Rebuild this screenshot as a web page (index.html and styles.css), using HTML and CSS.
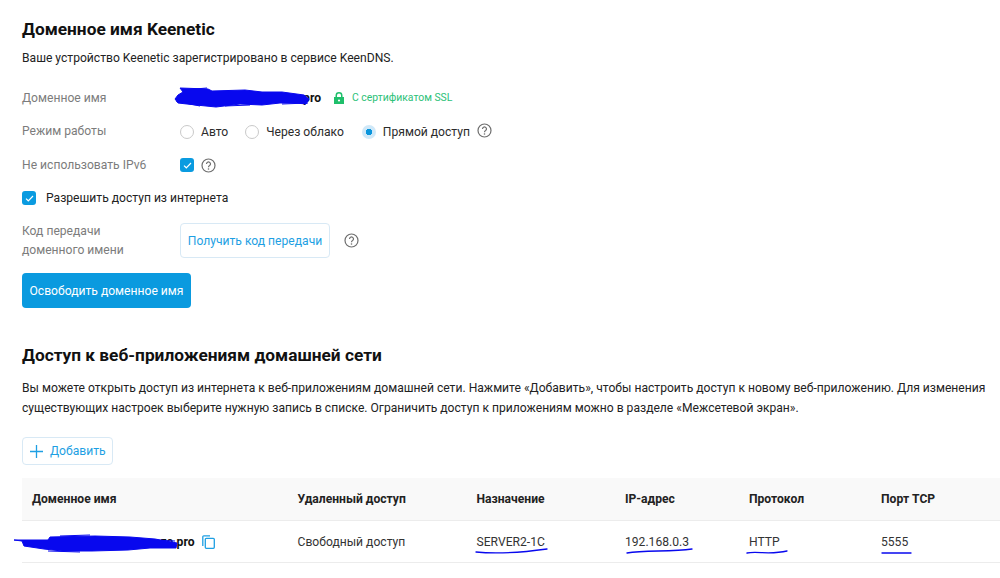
FILE: index.html
```html
<!DOCTYPE html>
<html lang="ru">
<head>
<meta charset="utf-8">
<title>KeenDNS</title>
<link rel="stylesheet" href="styles.css">
</head>
<body>
<main class="page">
  <h2 class="title">Доменное имя Keenetic</h2>
  <p class="text">Ваше устройство Keenetic зарегистрировано в сервисе KeenDNS.</p>

  <div class="row row-domain">
    <span class="label">Доменное имя</span>
    <strong class="domain">pro</strong>
    <svg class="lock" width="10" height="12" viewBox="0 0 10 12"><path fill="#1fbf6b" d="M0 5h1.5V3.4a3.5 3.4 0 0 1 7 0V5H10v7H0z M3 5h4V3.4a2 2 0 0 0-4 0z" fill-rule="evenodd"/><circle cx="5" cy="8.5" r="1.1" fill="#fff"/></svg>
    <span class="ssl">С сертификатом SSL</span>
  </div>

  <div class="row row-mode">
    <span class="label">Режим работы</span>
    <div class="radios">
      <span class="radio"><i class="dot"></i>Авто</span>
      <span class="radio"><i class="dot"></i>Через облако</span>
      <span class="radio"><i class="dot on"></i>Прямой доступ</span>
      <svg class="help help-up" width="15" height="15" viewBox="0 0 15 15"><circle cx="7.5" cy="7.5" r="6.5"/><path d="M5.5 5.9a2 2 0 1 1 3.1 1.7c-.7.4-1.1.8-1.1 1.6"/><circle class="pt" cx="7.5" cy="11" r=".8"/></svg>
    </div>
  </div>

  <div class="row row-ipv6">
    <span class="label">Не использовать IPv6</span>
    <i class="check"><svg width="9" height="7" viewBox="0 0 9 7"><path d="M1 3.6l2.3 2.2L8 1"/></svg></i>
    <svg class="help" width="15" height="15" viewBox="0 0 15 15"><circle cx="7.5" cy="7.5" r="6.5"/><path d="M5.5 5.9a2 2 0 1 1 3.1 1.7c-.7.4-1.1.8-1.1 1.6"/><circle class="pt" cx="7.5" cy="11" r=".8"/></svg>
  </div>

  <div class="row row-allow">
    <i class="check"><svg width="9" height="7" viewBox="0 0 9 7"><path d="M1 3.6l2.3 2.2L8 1"/></svg></i>
    <span>Разрешить доступ из интернета</span>
  </div>

  <div class="row row-code">
    <span class="label label-two">Код передачи<br>доменного имени</span>
    <button class="btn-outline btn-code">Получить код передачи</button>
    <svg class="help" width="15" height="15" viewBox="0 0 15 15"><circle cx="7.5" cy="7.5" r="6.5"/><path d="M5.5 5.9a2 2 0 1 1 3.1 1.7c-.7.4-1.1.8-1.1 1.6"/><circle class="pt" cx="7.5" cy="11" r=".8"/></svg>
  </div>

  <button class="btn-primary">Освободить доменное имя</button>

  <h2 class="title title-second">Доступ к веб-приложениям домашней сети</h2>
  <p class="text text-long">Вы можете открыть доступ из интернета к веб-приложениям домашней сети. Нажмите «Добавить», чтобы настроить доступ к новому веб-приложению. Для изменения существующих настроек выберите нужную запись в списке. Ограничить доступ к приложениям можно в разделе «Межсетевой экран».</p>

  <button class="btn-outline btn-add"><svg width="13" height="13" viewBox="0 0 13 13"><path d="M6.5 0v13M0 6.5h13"/></svg>Добавить</button>

  <div class="table">
    <div class="tr th">
      <span>Доменное имя</span><span>Удаленный доступ</span><span>Назначение</span><span>IP-адрес</span><span>Протокол</span><span>Порт TCP</span>
    </div>
    <div class="tr td">
      <span class="cell-domain"><strong>ze.pro</strong><svg width="13" height="14" viewBox="0 0 13 14"><path d="M.8 11V1.8a1 1 0 0 1 1-1H8"/><rect x="3.3" y="3.3" width="9" height="10" rx="1"/></svg></span>
      <span>Свободный доступ</span><span>SERVER2-1C</span><span>192.168.0.3</span><span>HTTP</span><span>5555</span>
    </div>
  </div>
</main>

<svg class="scribble" width="1000" height="578" viewBox="0 0 1000 578" aria-hidden="true">
  <path class="blob" d="M180 88 L208 89 L212 91 L245 90 L262 92 L282 92 L304 95 L309 99 L306 104 L296 103 L280 103 L262 105 L240 104 L216 107 L196 105 L178 103 L175 99 L178 95 L183 92z"/>
  <path class="fray" d="M183 90 L207 88 M176 101 L200 106 M225 106 L250 105 M282 104 L308 103"/>
  <path class="blob" d="M50 537 L95 536 L130 537 L155 539 L177 543 L176 548 L150 548 L128 550 L92 551 L62 551 L44 549 L24 546 L22 541 L14 540 L48 540z"/>
  <path class="fray" d="M60 536 L90 535 M48 551 L80 552 M130 539 L175 541"/>
  <path class="line" d="M476 552 C495 554 525 552 547 549"/>
  <path class="line" d="M627 553 C645 550 670 552 692 549"/>
  <path class="line" d="M747 553 C757 551 770 555 787 551"/>
  <path class="line" d="M882 553 L911 553"/>
</svg>
</body>
</html>
```

FILE: styles.css
```css
* { box-sizing: border-box; }
html, body { margin: 0; height: 578px; overflow: hidden; background: #fff; }
body { font-family: Roboto, "Noto Sans", sans-serif; font-size: 12.12px; line-height: 20px; color: #2b2b2b; position: relative; }
.page { padding: 17px 0 0 22px; }
.title { margin: 0; font-size: 17.3px; line-height: 24px; font-weight: 700; color: #111; }
.text { margin: 7px 0 0; color: #222; }
.text-long { width: 975px; margin-top: 11px; }
.row { display: flex; align-items: center; }
.label { width: 158px; color: #7c7c7c; flex: none; }
.row-domain { margin-top: 19px; height: 22px; }
.domain { color: #111; width: 141px; text-align: right; font-weight: 700; }
.lock { margin-left: 13px; }
.ssl { margin-left: 8px; font-size: 10.4px; color: #2cc178; }
.row-mode { margin-top: 11px; height: 22px; }
.radios { display: flex; align-items: center; margin-top: 2px; }
.radio { display: flex; align-items: center; margin-right: 17px; }
.radio:nth-child(2) { margin-right: 18px; }
.radio:nth-child(3) { margin-right: 7px; }
.dot { width: 14px; height: 14px; border-radius: 50%; border: 1px solid #c9c9c9; margin-right: 7px; background: #fff; display: block; }
.dot.on { border: 0; background: radial-gradient(circle, #0a95dc 0 3px, #cfe8f8 3.5px); }
.help { fill: none; stroke: #6e6e6e; stroke-width: 1.2; flex: none; }
.help .pt { fill: #6e6e6e; stroke: none; }
.help-up { margin-top: -4px; }
.row-ipv6 { margin-top: 12px; height: 22px; }
.row-ipv6 .help { margin-left: 7px; }
.check { width: 14px; height: 14px; border-radius: 3px; background: #0a9be0; display: flex; align-items: center; justify-content: center; flex: none; }
.check svg { fill: none; stroke: #fff; stroke-width: 1.2; }
.row-allow { margin-top: 11px; height: 22px; gap: 10px; color: #222; }
.row-code { margin-top: 14px; height: 35px; }
.label-two { line-height: 19px; padding-top: 1px; }
.btn-outline { font: inherit; color: #1e9fe3; background: #fff; border: 1px solid #d8e9f5; border-radius: 4px; padding: 0; }
.btn-code { width: 150px; height: 35px; }
.row-code .help { margin-left: 14px; }
.btn-primary { display: block; margin-top: 15px; width: 169px; height: 35px; font: inherit; color: #fff; background: #0a9adf; border: 0; border-radius: 4px; padding: 0; }
.title-second { margin-top: 35px; }
.btn-add { display: flex; align-items: center; gap: 7px; margin-top: 19px; width: 91px; height: 28px; padding-left: 7px; }
.btn-add svg { stroke: #1e9fe3; stroke-width: 1.3; fill: none; }
.table { margin-top: 13px; }
.tr { display: grid; grid-template-columns: 265.5px 179px 148.5px 124px 132px 1fr; align-items: center; padding-left: 10px; border-bottom: 1px solid #ececec; height: 42px; }
.th { font-weight: 700; color: #222; background: #f9f9f9; height: 43px; }
.td { color: #333; }
.cell-domain { display: flex; align-items: center; justify-content: flex-end; gap: 7px; padding-right: 83px; white-space: nowrap; }
.cell-domain strong { color: #111; }
.cell-domain svg { fill: none; stroke: #1e9fe3; stroke-width: 1.3; flex: none; }
.scribble { position: absolute; left: 0; top: 0; pointer-events: none; }
.blob { fill: #0808ee; stroke: #0808ee; stroke-width: 1; stroke-linejoin: round; }
.fray { fill: none; stroke: #0808ee; stroke-width: 1; }
.line { fill: none; stroke: #0808ee; stroke-width: 1.3; stroke-linecap: round; }
```
